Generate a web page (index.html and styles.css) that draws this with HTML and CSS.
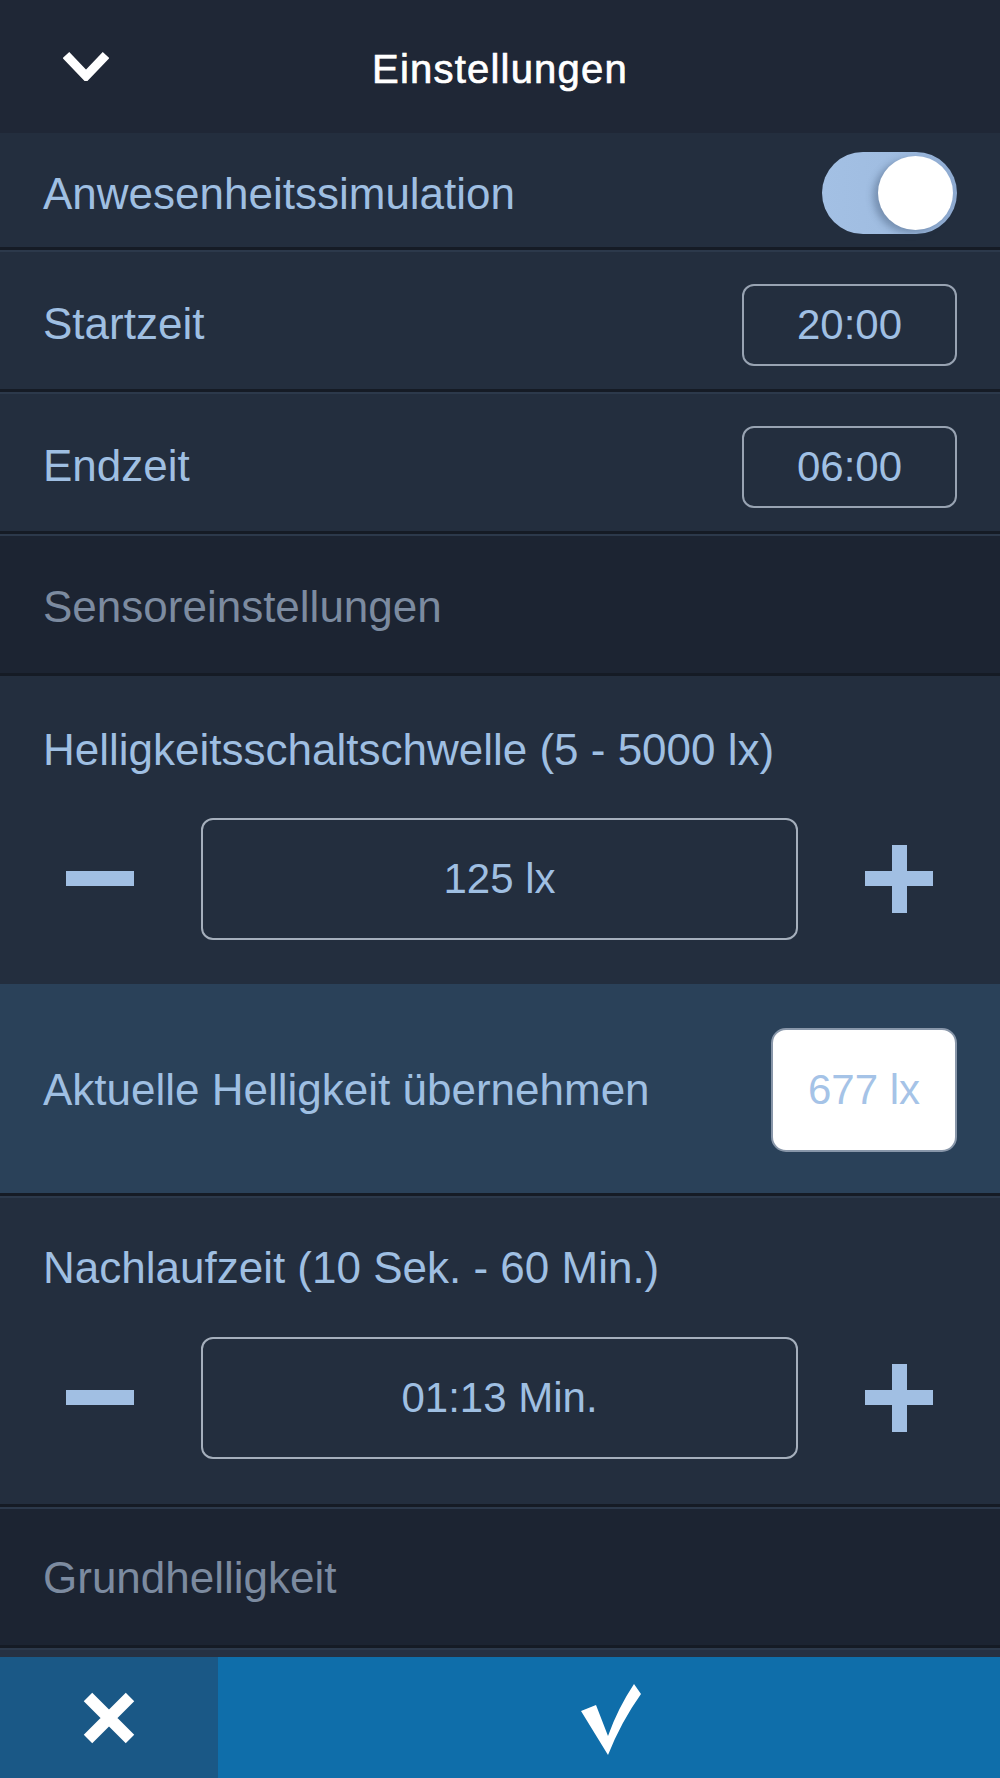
FILE: index.html
```html
<!DOCTYPE html>
<html lang="de">
<head>
<meta charset="utf-8">
<title>Einstellungen</title>
<link rel="stylesheet" href="styles.css">
</head>
<body>
<div class="screen">
  <header class="topbar">
    <div class="topbar-left">
      <svg class="chevron" width="46" height="30" viewBox="0 0 46 30"><polyline points="3,4 23,25 43,4" fill="none" stroke="#ffffff" stroke-width="9" stroke-linejoin="miter"/></svg>
    </div>
    <h1 class="title">Einstellungen</h1>
    <div class="topbar-right"></div>
  </header>

  <div class="row row-first">
    <span class="label">Anwesenheitssimulation</span>
    <div class="toggle"><div class="knob"></div></div>
  </div>

  <div class="row">
    <span class="label">Startzeit</span>
    <div class="time-box">20:00</div>
  </div>

  <div class="row">
    <span class="label">Endzeit</span>
    <div class="time-box">06:00</div>
  </div>

  <div class="row section">
    <span class="section-label">Sensoreinstellungen</span>
  </div>

  <div class="block block-lux">
    <div class="block-label">Helligkeitsschaltschwelle (5 - 5000 lx)</div>
    <div class="stepper">
      <svg class="step-btn" width="68" height="68" viewBox="0 0 68 68"><rect x="0" y="26" width="68" height="15" fill="#a1bfe3"/></svg>
      <div class="value-box">125 lx</div>
      <svg class="step-btn" width="68" height="68" viewBox="0 0 68 68"><rect x="0" y="26" width="68" height="15" fill="#a1bfe3"/><rect x="27" y="0" width="15" height="68" fill="#a1bfe3"/></svg>
    </div>
  </div>

  <div class="row highlight">
    <span class="label">Aktuelle Helligkeit übernehmen</span>
    <div class="light-box">677 lx</div>
  </div>

  <div class="block block-time">
    <div class="block-label">Nachlaufzeit (10 Sek. - 60 Min.)</div>
    <div class="stepper">
      <svg class="step-btn" width="68" height="68" viewBox="0 0 68 68"><rect x="0" y="26" width="68" height="15" fill="#a1bfe3"/></svg>
      <div class="value-box">01:13 Min.</div>
      <svg class="step-btn" width="68" height="68" viewBox="0 0 68 68"><rect x="0" y="26" width="68" height="15" fill="#a1bfe3"/><rect x="27" y="0" width="15" height="68" fill="#a1bfe3"/></svg>
    </div>
  </div>

  <div class="row section section-last">
    <span class="section-label">Grundhelligkeit</span>
  </div>

  <div class="peek"></div>

  <footer class="actions">
    <div class="action cancel">
      <svg width="56" height="56" viewBox="0 0 56 56"><path d="M7 7 L49 49 M49 7 L7 49" stroke="#ffffff" stroke-width="12" fill="none"/></svg>
    </div>
    <div class="action confirm">
      <svg width="62" height="72" viewBox="0 0 62 72"><path d="M1 27 L16 21 L28 52 Q38 24 54 0 L61 10 Q41 38 28 71 Z" fill="#ffffff"/></svg>
    </div>
  </footer>
</div>
</body>
</html>
```

FILE: styles.css
```css
* {
  box-sizing: border-box;
}

html, body {
  margin: 0;
  padding: 0;
  background: #1c2432;
}

.screen {
  width: 1000px;
  height: 1778px;
  overflow: hidden;
  display: flex;
  flex-direction: column;
  font-family: "Liberation Sans", Helvetica, Arial, sans-serif;
}

.topbar {
  height: 133px;
  flex: none;
  background: #1f2736;
  display: grid;
  grid-template-columns: 1fr auto 1fr;
  align-items: center;
}

.topbar-left {
  padding-left: 63px;
  display: flex;
  align-items: center;
}

.chevron {
  display: block;
  margin-top: -1px;
}

.title {
  margin: 0;
  color: #ffffff;
  font-size: 40px;
  font-weight: 400;
  letter-spacing: 1.2px;
  -webkit-text-stroke: 0.7px #ffffff;
  line-height: 1;
  margin-top: 4px;
}

.row {
  flex: none;
  height: 142px;
  display: flex;
  align-items: center;
  justify-content: space-between;
  padding: 0 43px;
  background: #232e3e;
  border-bottom: 3px solid #151b25;
  box-shadow: inset 0 2px 0 #2c394b;
}

.row-first {
  height: 117px;
  box-shadow: none;
}

.label {
  color: #9fbfe2;
  font-size: 44px;
  line-height: 48px;
  margin-top: 8px;
}

.section {
  background: #1c2432;
}

.section-last {
  height: 141px;
}

.section-label {
  color: #7c8ba0;
  font-size: 44px;
  line-height: 48px;
  margin-top: 6px;
}

.section-last .section-label {
  margin-top: 4px;
}

.toggle {
  width: 135px;
  height: 82px;
  border-radius: 41px;
  background: linear-gradient(90deg, #a3c0e4 0%, #9fbce0 60%, #8eaad0 100%);
  position: relative;
  margin-top: 6px;
}

.knob {
  position: absolute;
  right: 4px;
  top: 4px;
  width: 75px;
  height: 74px;
  border-radius: 50%;
  background: #ffffff;
  box-shadow: -5px 3px 7px rgba(40, 60, 90, 0.35);
}

.time-box {
  width: 215px;
  height: 82px;
  border: 2px solid #98a3b2;
  border-radius: 12px;
  display: flex;
  align-items: center;
  justify-content: center;
  color: #a0c0e4;
  font-size: 42px;
  margin-top: 11px;
}

.block {
  flex: none;
  background: #232e3e;
}

.block-lux {
  height: 308px;
  padding-top: 50px;
}

.block-time {
  height: 311px;
  padding-top: 48px;
  border-bottom: 3px solid #151b25;
  box-shadow: inset 0 2px 0 #2c394b;
}

.block-label {
  color: #9fbfe2;
  font-size: 44px;
  line-height: 48px;
  padding-left: 43px;
  margin-bottom: 44px;
}

.block-time .block-label {
  margin-bottom: 45px;
}

.stepper {
  display: flex;
  align-items: center;
  gap: 67px;
  padding: 0 67px 0 66px;
}

.step-btn {
  flex: none;
  display: block;
}

.value-box {
  flex: 1;
  height: 122px;
  border: 2px solid #a5afbc;
  border-radius: 12px;
  display: flex;
  align-items: center;
  justify-content: center;
  color: #9fbfe2;
  font-size: 42px;
}

.highlight {
  height: 212px;
  background: #2a4159;
  box-shadow: none;
}

.highlight .label {
  margin-top: 3px;
}

.light-box {
  width: 186px;
  height: 124px;
  background: #ffffff;
  border: 2px solid #8896a9;
  border-radius: 15px;
  display: flex;
  align-items: center;
  justify-content: center;
  color: #a5c3e7;
  font-size: 42px;
  margin-top: 2px;
}

.peek {
  flex: none;
  height: 9px;
  background: #263143;
  box-shadow: inset 0 2px 0 #2c394b;
}

.actions {
  flex: none;
  height: 121px;
  display: flex;
}

.action {
  display: flex;
  align-items: center;
  justify-content: center;
}

.cancel {
  width: 218px;
  background: #1a5886;
}

.confirm {
  flex: 1;
  background: #0f6eaa;
}

.confirm svg {
  margin-left: 4px;
  margin-top: 4px;
}
```
